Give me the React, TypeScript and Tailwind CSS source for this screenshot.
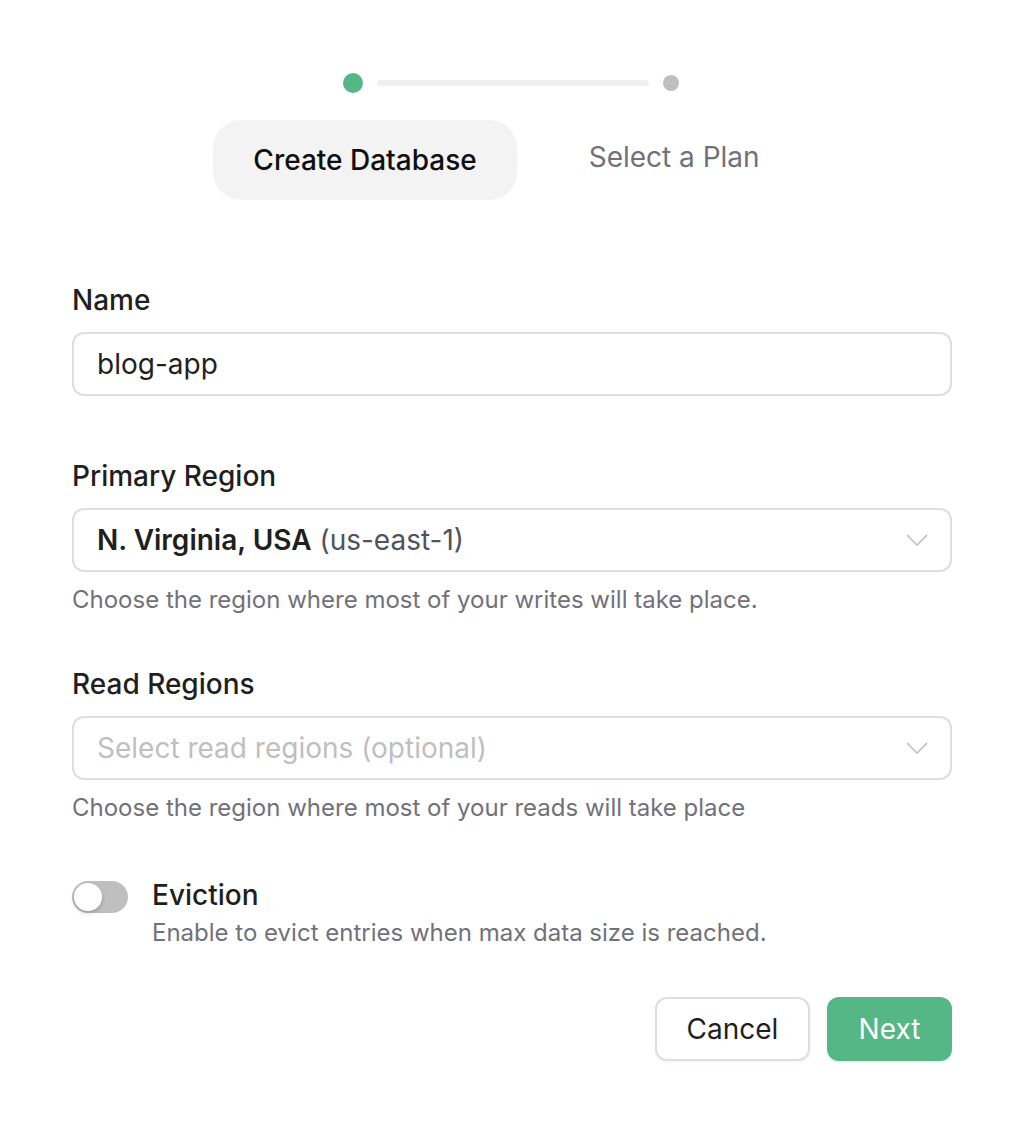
import React, { useState } from 'react'

function Chevron() {
  return (
    <svg width="22" height="12" viewBox="0 0 22 12" fill="none" className="shrink-0">
      <path d="M1 1l10 10L21 1" stroke="#bfbfbf" strokeWidth="1.6" />
    </svg>
  )
}

export default function App() {
  const [name, setName] = useState('blog-app')
  const [eviction, setEviction] = useState(false)

  return (
    <div
      className="min-h-screen bg-white pl-[72px] pr-[74px] pt-[73px] text-[#1f1f1f]"
      style={{ fontFamily: 'Inter, "Noto Sans", sans-serif' }}
    >
      {/* Stepper */}
      <div className="flex items-center justify-center gap-[14px] pr-[2px]">
        <div className="h-5 w-5 rounded-full bg-[#55b786]" />
        <div className="h-[6px] w-[272px] rounded-full bg-[#f0f0f0]" />
        <div className="h-4 w-4 rounded-full bg-[#bfbfbf]" />
      </div>

      {/* Tabs */}
      <div className="mt-[27px] flex items-center justify-center gap-[31px] pr-[10px]">
        <button className="h-[80px] rounded-[28px] bg-[#f3f3f3] px-[40px] text-[28px] font-medium text-[#0f0f0f]">
          Create Database
        </button>
        <button className="h-[80px] px-[41px] pb-[6px] text-[28px] text-[#71717a]">
          Select a Plan
        </button>
      </div>

      {/* Name */}
      <div className="mt-[82px]">
        <label className="block text-[28px] font-medium leading-[36px]">Name</label>
        <input
          value={name}
          onChange={(e) => setName(e.target.value)}
          className="mt-[14px] h-[64px] w-full rounded-[12px] border-2 border-[#dedede] px-[23px] text-[28px] text-[#1f1f1f] outline-none"
        />
      </div>

      {/* Primary Region */}
      <div className="mt-[62px]">
        <label className="block text-[28px] font-medium leading-[36px]">Primary Region</label>
        <div className="mt-[14px] flex h-[64px] w-full items-center justify-between rounded-[12px] border-2 border-[#dedede] pl-[23px] pr-[22px]">
          <span className="text-[28px]">
            <span className="font-semibold">N. Virginia, USA</span>{' '}
            <span className="text-[#52525b]">(us-east-1)</span>
          </span>
          <Chevron />
        </div>
        <p className="mt-[12px] text-[24px] leading-[32px] text-[#71717a]">
          Choose the region where most of your writes will take place.
        </p>
      </div>

      {/* Read Regions */}
      <div className="mt-[50px]">
        <label className="block text-[28px] font-medium leading-[36px]">Read Regions</label>
        <div className="mt-[14px] flex h-[64px] w-full items-center justify-between rounded-[12px] border-2 border-[#dedede] pl-[23px] pr-[22px]">
          <span className="text-[28px] text-[#bfbfbf]">Select read regions (optional)</span>
          <Chevron />
        </div>
        <p className="mt-[12px] text-[24px] leading-[32px] text-[#71717a]">
          Choose the region where most of your reads will take place
        </p>
      </div>

      {/* Eviction */}
      <div className="mt-[55px] flex gap-[24px]">
        <button
          onClick={() => setEviction(!eviction)}
          className={`mt-[2px] flex h-[32px] w-[56px] shrink-0 items-center rounded-full p-[2px] ${
            eviction ? 'justify-end bg-[#55b786]' : 'justify-start bg-[#bfbfbf]'
          }`}
        >
          <span className="h-[28px] w-[28px] rounded-full bg-white shadow-[0_2px_4px_rgba(0,0,0,0.2)]" />
        </button>
        <div>
          <div className="text-[28px] font-medium leading-[32px]">Eviction</div>
          <div className="mt-[6px] text-[24px] leading-[32px] text-[#71717a]">
            Enable to evict entries when max data size is reached.
          </div>
        </div>
      </div>

      {/* Actions */}
      <div className="mt-[48px] flex justify-end gap-[17px]">
        <button className="h-[64px] w-[155px] rounded-[12px] border-2 border-[#dedede] bg-white text-[28px] text-[#1f1f1f] shadow-[0_2px_4px_rgba(0,0,0,0.04)]">
          Cancel
        </button>
        <button className="h-[64px] w-[125px] rounded-[12px] bg-[#55b786] text-[28px] text-white shadow-[0_2px_2px_rgba(82,183,136,0.15)]">
          Next
        </button>
      </div>
    </div>
  )
}
